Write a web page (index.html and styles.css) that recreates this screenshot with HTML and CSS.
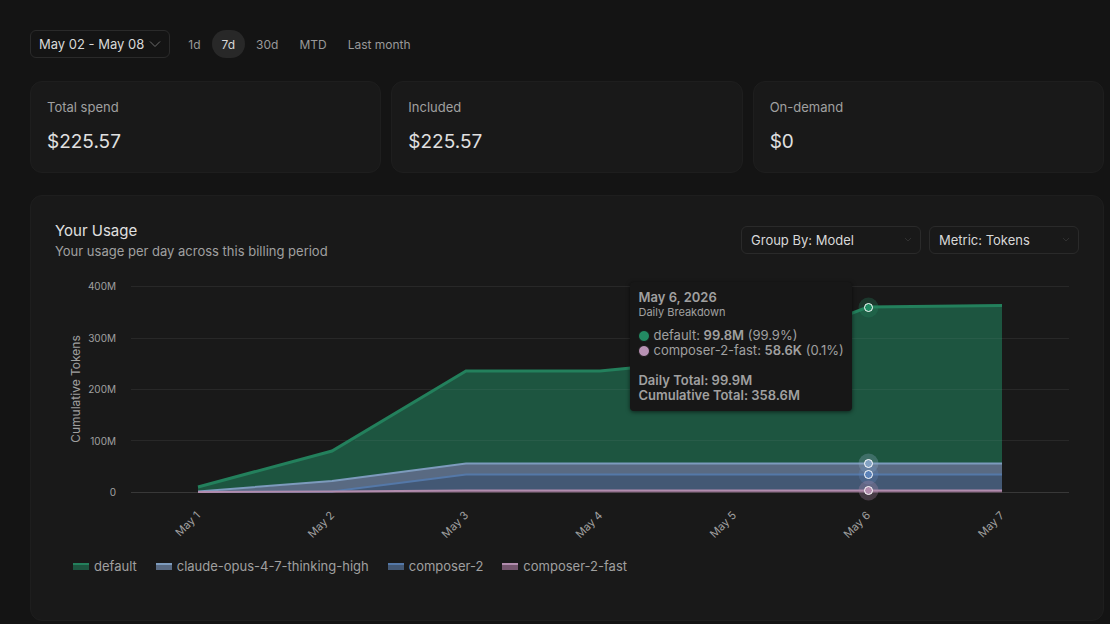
FILE: index.html
```html
<!DOCTYPE html>
<html lang="en">
<head>
  <meta charset="UTF-8" />
  <meta name="viewport" content="width=device-width, initial-scale=1.0"/>
  <title>Usage</title>
  <link rel="stylesheet" href="styles.css">
</head>
<body>

  <div class="toolbar">
    <button class="date-btn">
      May 02 - May 08
      <svg class="chevron" width="12" height="8" viewBox="0 0 12 8"><path d="M1 1.5 L6 6.5 L11 1.5"/></svg>
    </button>
    <div class="ranges">
      <button class="range">1d</button>
      <button class="range active">7d</button>
      <button class="range">30d</button>
      <button class="range">MTD</button>
      <button class="range">Last month</button>
    </div>
  </div>

  <div class="cards">
    <div class="card">
      <div class="card-label">Total spend</div>
      <div class="card-value">$225.57</div>
    </div>
    <div class="card">
      <div class="card-label">Included</div>
      <div class="card-value">$225.57</div>
    </div>
    <div class="card">
      <div class="card-label">On-demand</div>
      <div class="card-value">$0</div>
    </div>
  </div>

  <div class="panel">
    <div class="panel-header">
      <div>
        <h1>Your Usage</h1>
        <p>Your usage per day across this billing period</p>
      </div>
      <div class="filters">
        <div class="select-wrap">
          <select id="group" class="group" aria-label="Group by">
            <option>Group By: Model</option>
            <option>Group By: User</option>
          </select>
          <svg class="select-arrow" width="8" height="6" viewBox="0 0 8 6"><path d="M1 1 L4 4 L7 1"/></svg>
        </div>
        <div class="select-wrap">
          <select id="metric" class="metric" aria-label="Metric">
            <option>Metric: Tokens</option>
            <option>Metric: Spend</option>
          </select>
          <svg class="select-arrow" width="8" height="6" viewBox="0 0 8 6"><path d="M1 1 L4 4 L7 1"/></svg>
        </div>
      </div>
    </div>

    <div class="chart">
      <svg class="plot" viewBox="0 0 1024 280">
        <!-- grid -->
        <g class="grid">
          <path d="M76 16.5H1014M76 68.5H1014M76 119.5H1014M76 170.5H1014"/>
          <path class="axis" d="M76 222.5H1014"/>
        </g>

        <!-- areas -->
        <path fill="#1d5540" d="M143 217 L277 181 L411 101 L545 101 L679 88 L813 37 L947 35.5 V193.5 H411 L277 211 L143 222 Z"/>
        <path fill="#596a82" d="M143 222 L277 211 L411 193.5 H947 V204.5 H411 L277 221.5 Z"/>
        <path fill="#435874" d="M143 222 L277 221.5 L411 204.5 H947 V220.5 H411 Z"/>
        <path fill="#74566e" d="M143 222 L277 221.5 L411 220.5 H947 V222.5 H143 Z"/>
        <path class="grid-over" d="M750 68.5H947M385 119.5H947M300 170.5H947"/>

        <!-- lines -->
        <g class="lines">
          <path stroke="#23805c" d="M143 217 L277 181 L411 101 L545 101 L679 88 L813 37 L947 35.5"/>
          <path stroke="#5478a8" d="M143 222 L277 221.5 L411 204.5 H947"/>
          <path stroke="#7d9bbd" d="M143 221.5 L277 211 L411 193.5 H947"/>
          <path stroke="#b18cad" d="M143 222 L277 221.5 L411 220.5 H947"/>
        </g>

        <!-- May 6 markers -->
        <g class="halos">
          <circle cx="813.5" cy="37.5" r="10" fill="#23805c"/>
          <circle cx="813.5" cy="193.5" r="10" fill="#8fabc8"/>
          <circle cx="813.5" cy="204.5" r="10" fill="#5f84b8"/>
          <circle cx="813.5" cy="220.5" r="10" fill="#b18cad"/>
        </g>
        <g class="dots">
          <circle cx="813.5" cy="37.5" r="4" fill="#1f8a62"/>
          <circle cx="813.5" cy="193.5" r="4" fill="#83a2c3"/>
          <circle cx="813.5" cy="204.5" r="4" fill="#5b82b8"/>
          <circle cx="813.5" cy="220.5" r="4" fill="#b18cad"/>
        </g>

        <g class="y-labels">
          <text x="61" y="20">400M</text>
          <text x="61" y="72">300M</text>
          <text x="61" y="123">200M</text>
          <text x="61" y="175">100M</text>
          <text x="61" y="226">0</text>
        </g>
        <text class="y-title" transform="translate(25 119) rotate(-90)">Cumulative Tokens</text>
        <g class="x-labels">
          <text transform="translate(146 246) rotate(-45)">May 1</text>
          <text transform="translate(280 246) rotate(-45)">May 2</text>
          <text transform="translate(414 246) rotate(-45)">May 3</text>
          <text transform="translate(548 246) rotate(-45)">May 4</text>
          <text transform="translate(682 246) rotate(-45)">May 5</text>
          <text transform="translate(816 246) rotate(-45)">May 6</text>
          <text transform="translate(950 246) rotate(-45)">May 7</text>
        </g>
      </svg>

      <div class="tooltip">
        <strong>May 6, 2026</strong>
        <div class="tooltip-sub">Daily Breakdown</div>
        <div class="tooltip-row"><span class="dot green"></span><span>default: <b>99.8M</b> (99.9%)</span></div>
        <div class="tooltip-row"><span class="dot pink"></span><span>composer-2-fast: <b>58.6K</b> (0.1%)</span></div>
        <div class="tooltip-total">Daily Total: 99.9M<br>Cumulative Total: 358.6M</div>
      </div>
    </div>

    <div class="legend">
      <div class="legend-item"><span class="swatch s-default"></span>default</div>
      <div class="legend-item"><span class="swatch s-claude"></span>claude-opus-4-7-thinking-high</div>
      <div class="legend-item"><span class="swatch s-composer"></span>composer-2</div>
      <div class="legend-item"><span class="swatch s-fast"></span>composer-2-fast</div>
    </div>
  </div>

</body>
</html>
```
FILE: styles.css
```css
* {
  box-sizing: border-box;
}

body {
  font-family: Inter, sans-serif;
  font-size: 13px;
  line-height: 16px;
  background-color: #141414;
  color: #a0a0a0;
  margin: 0;
  padding: 30px 6px 3px 30px;
}

button,
select {
  font-family: inherit;
  font-size: 13px;
  color: #d8d8d8;
  background-color: transparent;
  cursor: pointer;
}

.toolbar {
  display: flex;
  align-items: center;
  gap: 8px;
  margin-bottom: 23px;
}

.date-btn {
  display: flex;
  align-items: center;
  gap: 5px;
  height: 28px;
  padding: 0 8px;
  border: 1px solid #2a2a2a;
  border-radius: 6px;
}

.chevron {
  fill: none;
  stroke: #6c6c6c;
}

.ranges {
  display: flex;
  gap: 1px;
}

.range {
  height: 28px;
  padding: 0 10px;
  border: none;
  border-radius: 14px;
  font-size: 12px;
  color: #999;
}

.range.active {
  background-color: #282828;
  color: #d8d8d8;
}

.cards {
  display: grid;
  grid-template-columns: repeat(3, 1fr);
  gap: 10px;
  margin-bottom: 22px;
}

.card {
  padding: 17px 16px 18px;
  background-color: #191919;
  border: 1px solid #1e1e1e;
  border-radius: 12px;
}

.card-label {
  margin-bottom: 15px;
}

.card-value {
  font-size: 19px;
  line-height: 24px;
  color: #e0e0e0;
}

.panel {
  padding: 24px 24px 46px;
  background-color: #191919;
  border: 1px solid #1e1e1e;
  border-radius: 12px;
}

.panel-header {
  display: flex;
  justify-content: space-between;
  align-items: center;
}

h1 {
  margin: 0 0 1px;
  font-size: 15px;
  line-height: 22px;
  font-weight: 400;
  color: #e0e0e0;
}

p {
  margin: 0;
}

.filters {
  display: flex;
  gap: 8px;
}

.select-wrap {
  position: relative;
}

select {
  display: block;
  appearance: none;
  height: 28px;
  padding: 0 9px;
  border: 1px solid #2a2a2a;
  border-radius: 6px;
}

.group {
  width: 180px;
}

.metric {
  width: 150px;
}

.select-arrow {
  position: absolute;
  right: 9px;
  top: 11px;
  fill: none;
  stroke: #303030;
  pointer-events: none;
}

.chart {
  position: relative;
  margin-top: 11px;
}

.plot {
  display: block;
  width: 100%;
  fill: #a0a0a0;
}

.grid path,
.grid-over {
  fill: none;
  stroke: #282828;
}

.grid .axis {
  stroke: #383838;
}

.grid-over {
  stroke: #285c49;
}

.lines path {
  fill: none;
  stroke-width: 2px;
}

.lines path:first-child {
  stroke-width: 3px;
}

.halos circle {
  opacity: 0.3;
}

.dots circle {
  stroke: #fff;
}

.y-labels,
.x-labels {
  font-size: 11px;
  text-anchor: end;
}

.y-labels {
  font-size: 10px;
}

.y-title {
  font-size: 12px;
  text-anchor: middle;
}

/* sits left of the hovered point */
.tooltip {
  position: absolute;
  right: 22.2%;
  top: 12px;
  padding: 8px;
  background-color: #171717;
  border-radius: 4px;
  box-shadow: 0 1px 4px rgba(0, 0, 0, 0.6);
  line-height: 15px;
  white-space: nowrap;
}

.tooltip-sub {
  font-size: 11px;
  margin-bottom: 8px;
}

.tooltip-row {
  display: flex;
  align-items: center;
  gap: 3px;
}

.dot {
  width: 12px;
  height: 12px;
  border: 1px solid #171717;
  border-radius: 50%;
}

.green {
  background-color: #238a63;
}

.pink {
  background-color: #b892b4;
}

.tooltip-total {
  margin-top: 15px;
  font-weight: 600;
}

.tooltip b,
.tooltip strong {
  font-weight: 600;
}

.legend {
  display: flex;
  gap: 19px;
  margin-top: 8px;
  padding-left: 18px;
}

.legend-item {
  display: flex;
  align-items: center;
  gap: 5px;
}

.swatch {
  width: 16px;
  height: 7px;
  border-top: 2px solid;
}

.s-default {
  background-color: #1d5540;
  border-color: #23805c;
}

.s-claude {
  background-color: #596a82;
  border-color: #7d9bbd;
}

.s-composer {
  background-color: #435874;
  border-color: #5478a8;
}

.s-fast {
  background-color: #74566e;
  border-color: #b18cad;
}
```
